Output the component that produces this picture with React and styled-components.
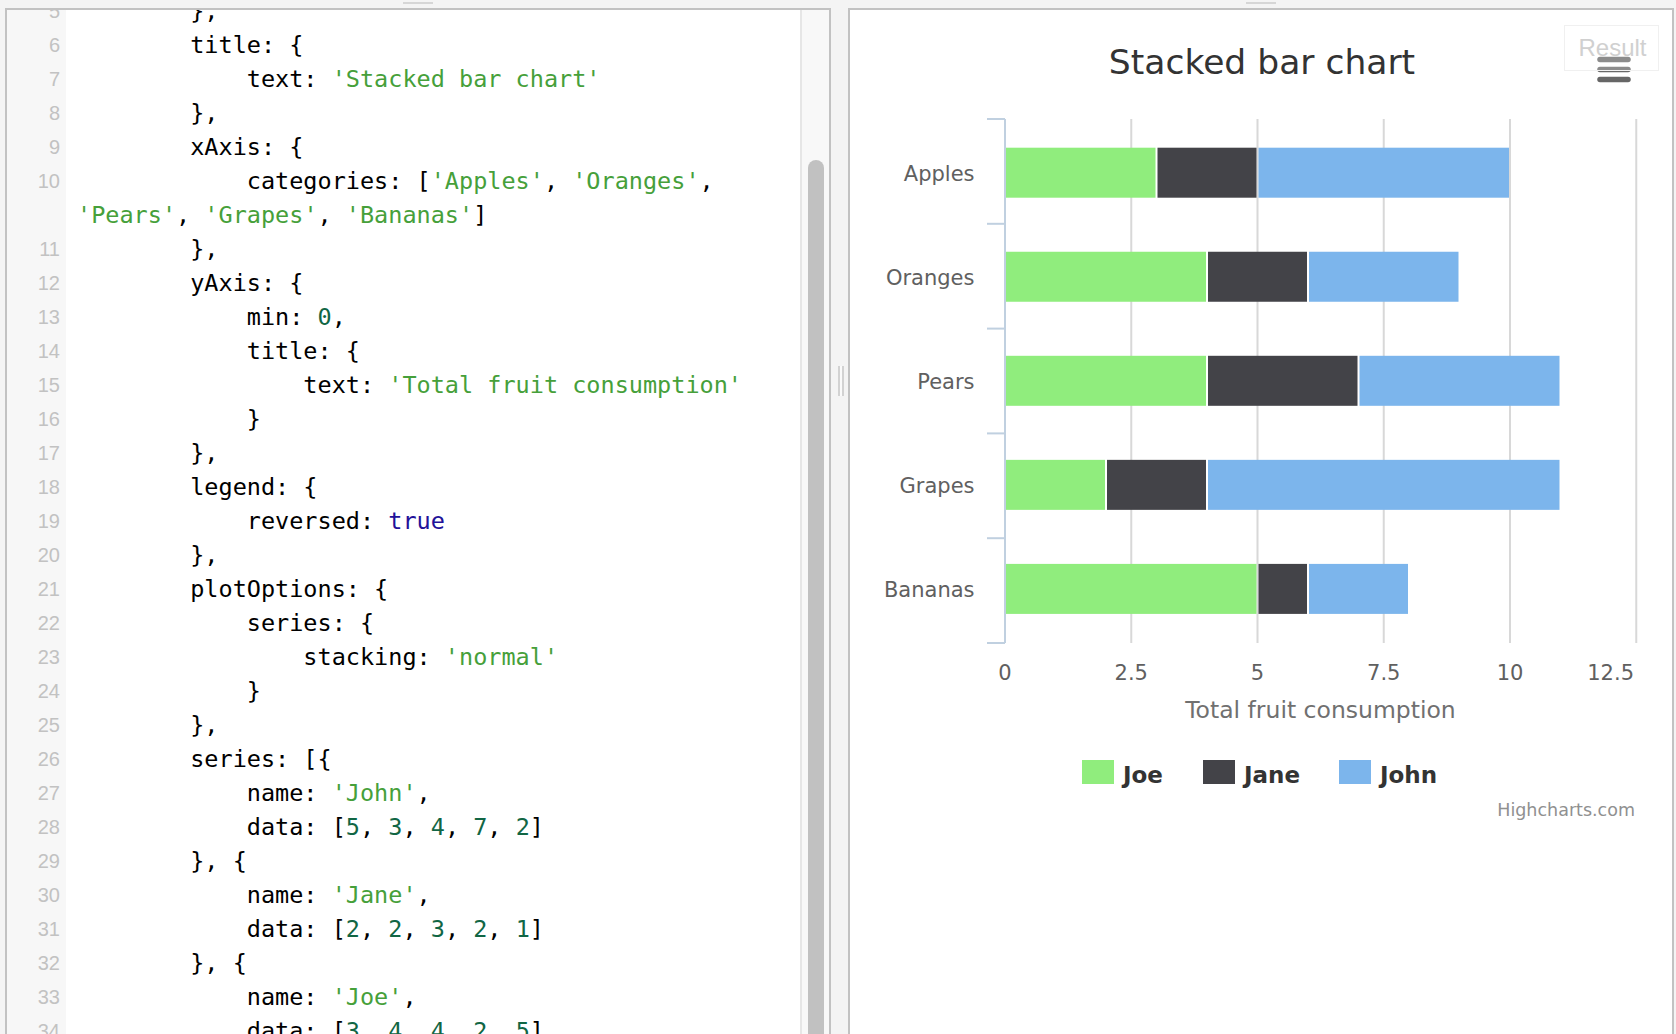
import React from 'react';
import styled, { createGlobalStyle } from 'styled-components';

const GlobalStyle = createGlobalStyle`
  html, body {
    margin: 0;
    padding: 0;
    background: #f4f4f4;
    overflow: hidden;
  }
`;

const Workspace = styled.div`
  display: flex;
  height: 1034px;
  padding: 0 2px 0 5px;
  box-sizing: border-box;
`;

const PaneColumn = styled.div`
  display: flex;
  flex-direction: column;
  width: 826px;
`;

const DragHandle = styled.div`
  height: 8px;
  display: flex;
  justify-content: center;
  align-items: flex-start;

  &::before {
    content: '';
    width: 30px;
    height: 2px;
    margin-top: 2px;
    background: #d6d6d6;
  }
`;

const Pane = styled.div`
  flex: 1;
  position: relative;
  display: flex;
  overflow: hidden;
  background: #fff;
  border: 2px solid #c2c2c2;
  border-bottom: none;
`;

const Splitter = styled.div`
  width: 17px;
  padding: 366px 0 0 7px;
  box-sizing: border-box;
`;

const SplitGrip = styled.div`
  width: 6px;
  height: 30px;
  box-sizing: border-box;
  border-left: 2px solid #d2d2d2;
  border-right: 2px solid #d2d2d2;
  background: #fafafa;
`;

/* ---------- editor ---------- */

const Lines = styled.div`
  flex: 1;
  overflow: hidden;
`;

// the editor is scrolled a little past line 5
const LineList = styled.div`
  margin-top: -16px;
`;

const Row = styled.div`
  display: grid;
  grid-template-columns: 59px 1fr;
  height: 34px;
  line-height: 34px;
`;

const LineNo = styled.div`
  background: #f7f7f7;
  text-align: right;
  padding-right: 6px;
  font-family: "Liberation Sans", Arial, sans-serif;
  font-size: 20px;
  color: #c2c2c2;
`;

const CodeText = styled.div`
  padding-left: 11px;
  white-space: pre;
  font-family: "DejaVu Sans Mono", "Liberation Mono", monospace;
  font-size: 23.5px;
  color: #000;
`;

const tokenColors = {
  plain: '#000',
  str: '#46a03a',
  num: '#116644',
  atom: '#221199',
};

const Token = styled.span`
  color: ${(p) => tokenColors[p.$kind]};
`;

const ScrollTrack = styled.div`
  width: 29px;
  box-sizing: border-box;
  background: #f8f8f8;
  border-left: 2px solid #e6e6e6;
  padding: 150px 0 0 6px;
`;

const ScrollThumb = styled.div`
  width: 16px;
  height: 1000px;
  border-radius: 8px;
  background: #c1c1c1;
`;

const source = [
  [5, '        },'],
  [6, '        title: {'],
  [7, "            text: 'Stacked bar chart'"],
  [8, '        },'],
  [9, '        xAxis: {'],
  [10, "            categories: ['Apples', 'Oranges',"],
  ['', "'Pears', 'Grapes', 'Bananas']"],
  [11, '        },'],
  [12, '        yAxis: {'],
  [13, '            min: 0,'],
  [14, '            title: {'],
  [15, "                text: 'Total fruit consumption'"],
  [16, '            }'],
  [17, '        },'],
  [18, '        legend: {'],
  [19, '            reversed: true'],
  [20, '        },'],
  [21, '        plotOptions: {'],
  [22, '            series: {'],
  [23, "                stacking: 'normal'"],
  [24, '            }'],
  [25, '        },'],
  [26, '        series: [{'],
  [27, "            name: 'John',"],
  [28, '            data: [5, 3, 4, 7, 2]'],
  [29, '        }, {'],
  [30, "            name: 'Jane',"],
  [31, '            data: [2, 2, 3, 2, 1]'],
  [32, '        }, {'],
  [33, "            name: 'Joe',"],
  [34, '            data: [3, 4, 4, 2, 5]'],
  [35, '        }]'],
];

const tokenize = (line) =>
  line.split(/('[^']*'|\b\d+\b|\btrue\b)/).map((part, i) => {
    if (i % 2 === 0) return { kind: 'plain', text: part };
    if (part.startsWith("'")) return { kind: 'str', text: part };
    if (part === 'true') return { kind: 'atom', text: part };
    return { kind: 'num', text: part };
  });

const Editor = () => (
  <>
    <Lines>
      <LineList>
        {source.map(([no, line], idx) => (
          <Row key={idx}>
            <LineNo>{no}</LineNo>
            <CodeText>
              {tokenize(line).map((t, i) => (
                <Token key={i} $kind={t.kind}>{t.text}</Token>
              ))}
            </CodeText>
          </Row>
        ))}
      </LineList>
    </Lines>
    <ScrollTrack>
      <ScrollThumb />
    </ScrollTrack>
  </>
);

/* ---------- chart ---------- */

const ResultTag = styled.div`
  position: absolute;
  top: 15px;
  right: 13px;
  width: 95px;
  height: 46px;
  box-sizing: border-box;
  border: 1px solid #f0f0f0;
  background: rgba(255, 255, 255, 0.25);
  display: flex;
  align-items: center;
  justify-content: center;
  font-family: "Liberation Sans", Arial, sans-serif;
  font-size: 24px;
  color: #d0d0d0;
  padding-left: 2px;
`;

const ChartSvg = styled.svg`
  display: block;
  font-family: "DejaVu Sans", "Noto Sans", sans-serif;
`;

const categories = ['Apples', 'Oranges', 'Pears', 'Grapes', 'Bananas'];
const series = [
  { name: 'Joe', color: '#90ed7d', data: [3, 4, 4, 2, 5] },
  { name: 'Jane', color: '#434348', data: [2, 2, 3, 2, 1] },
  { name: 'John', color: '#7cb5ec', data: [5, 3, 4, 7, 2] },
];

const X0 = 155;
const UNIT = 50.5;
const PLOT_TOP = 109;
const PLOT_BOTTOM = 633;
const BAND = (PLOT_BOTTOM - PLOT_TOP) / 5;
const xOf = (v) => X0 + v * UNIT;
const barCenter = (i) => 162.7 + i * 104.05;
const ticks = [0, 2.5, 5, 7.5, 10, 12.5];

const legendItems = [
  { name: 'Joe', color: '#90ed7d', x: 232 },
  { name: 'Jane', color: '#434348', x: 353 },
  { name: 'John', color: '#7cb5ec', x: 489 },
];

const StackedBarChart = () => (
  <ChartSvg width="822" height="840" viewBox="0 0 822 840">
    <text x="412" y="64" textAnchor="middle" fontSize="34.5" fill="#333">
      Stacked bar chart
    </text>

    {/* export menu button */}
    <g stroke="#666" strokeWidth="5.5" strokeLinecap="round">
      <line x1="750" y1="49.5" x2="778" y2="49.5" />
      <line x1="750" y1="59.5" x2="778" y2="59.5" />
      <line x1="750" y1="69.5" x2="778" y2="69.5" />
    </g>

    {/* grid */}
    {ticks.slice(1).map((t) => (
      <line key={t} x1={xOf(t)} x2={xOf(t)} y1={PLOT_TOP} y2={PLOT_BOTTOM} stroke="#d8d8d8" strokeWidth="2" />
    ))}

    {/* category axis */}
    <line x1={X0} x2={X0} y1={PLOT_TOP} y2={PLOT_BOTTOM} stroke="#c0d0e0" strokeWidth="2" />
    {[0, 1, 2, 3, 4, 5].map((i) => (
      <line key={i} x1={X0 - 18} x2={X0} y1={PLOT_TOP + i * BAND} y2={PLOT_TOP + i * BAND} stroke="#c0d0e0" strokeWidth="2" />
    ))}

    {/* bars */}
    {categories.map((cat, i) => {
      let acc = 0;
      return (
        <g key={cat}>
          {series.map((s) => {
            const v0 = acc;
            acc += s.data[i];
            const left = xOf(v0) + 1;
            const right = xOf(acc) - 1;
            return (
              <rect key={s.name} x={left} y={barCenter(i) - 25} width={right - left} height="50" fill={s.color} />
            );
          })}
          <text x="124.5" y={barCenter(i) + 8} textAnchor="end" fontSize="21" fill="#606060">
            {cat}
          </text>
        </g>
      );
    })}

    {/* value axis labels */}
    {ticks.map((t, i) => (
      <text
        key={t}
        x={i === ticks.length - 1 ? 784 : xOf(t)}
        y="669.5"
        textAnchor={i === ticks.length - 1 ? 'end' : 'middle'}
        fontSize="21"
        fill="#606060"
      >
        {t}
      </text>
    ))}
    <text x="470.5" y="707.5" textAnchor="middle" fontSize="23.5" fill="#707070">
      Total fruit consumption
    </text>

    {/* legend */}
    {legendItems.map((item) => (
      <g key={item.name}>
        <rect x={item.x} y="750" width="32" height="24" fill={item.color} />
        <text x={item.x + 41} y="773" fontSize="23" fontWeight="bold" fill="#333">
          {item.name}
        </text>
      </g>
    ))}

    <text x="785" y="806" textAnchor="end" fontSize="17.5" fill="#909090">
      Highcharts.com
    </text>
  </ChartSvg>
);

export default function App() {
  return (
    <>
      <GlobalStyle />
      <Workspace>
        <PaneColumn>
          <DragHandle />
          <Pane>
            <Editor />
          </Pane>
        </PaneColumn>
        <Splitter>
          <SplitGrip />
        </Splitter>
        <PaneColumn>
          <DragHandle />
          <Pane>
            <StackedBarChart />
            <ResultTag>Result</ResultTag>
          </Pane>
        </PaneColumn>
      </Workspace>
    </>
  );
}
